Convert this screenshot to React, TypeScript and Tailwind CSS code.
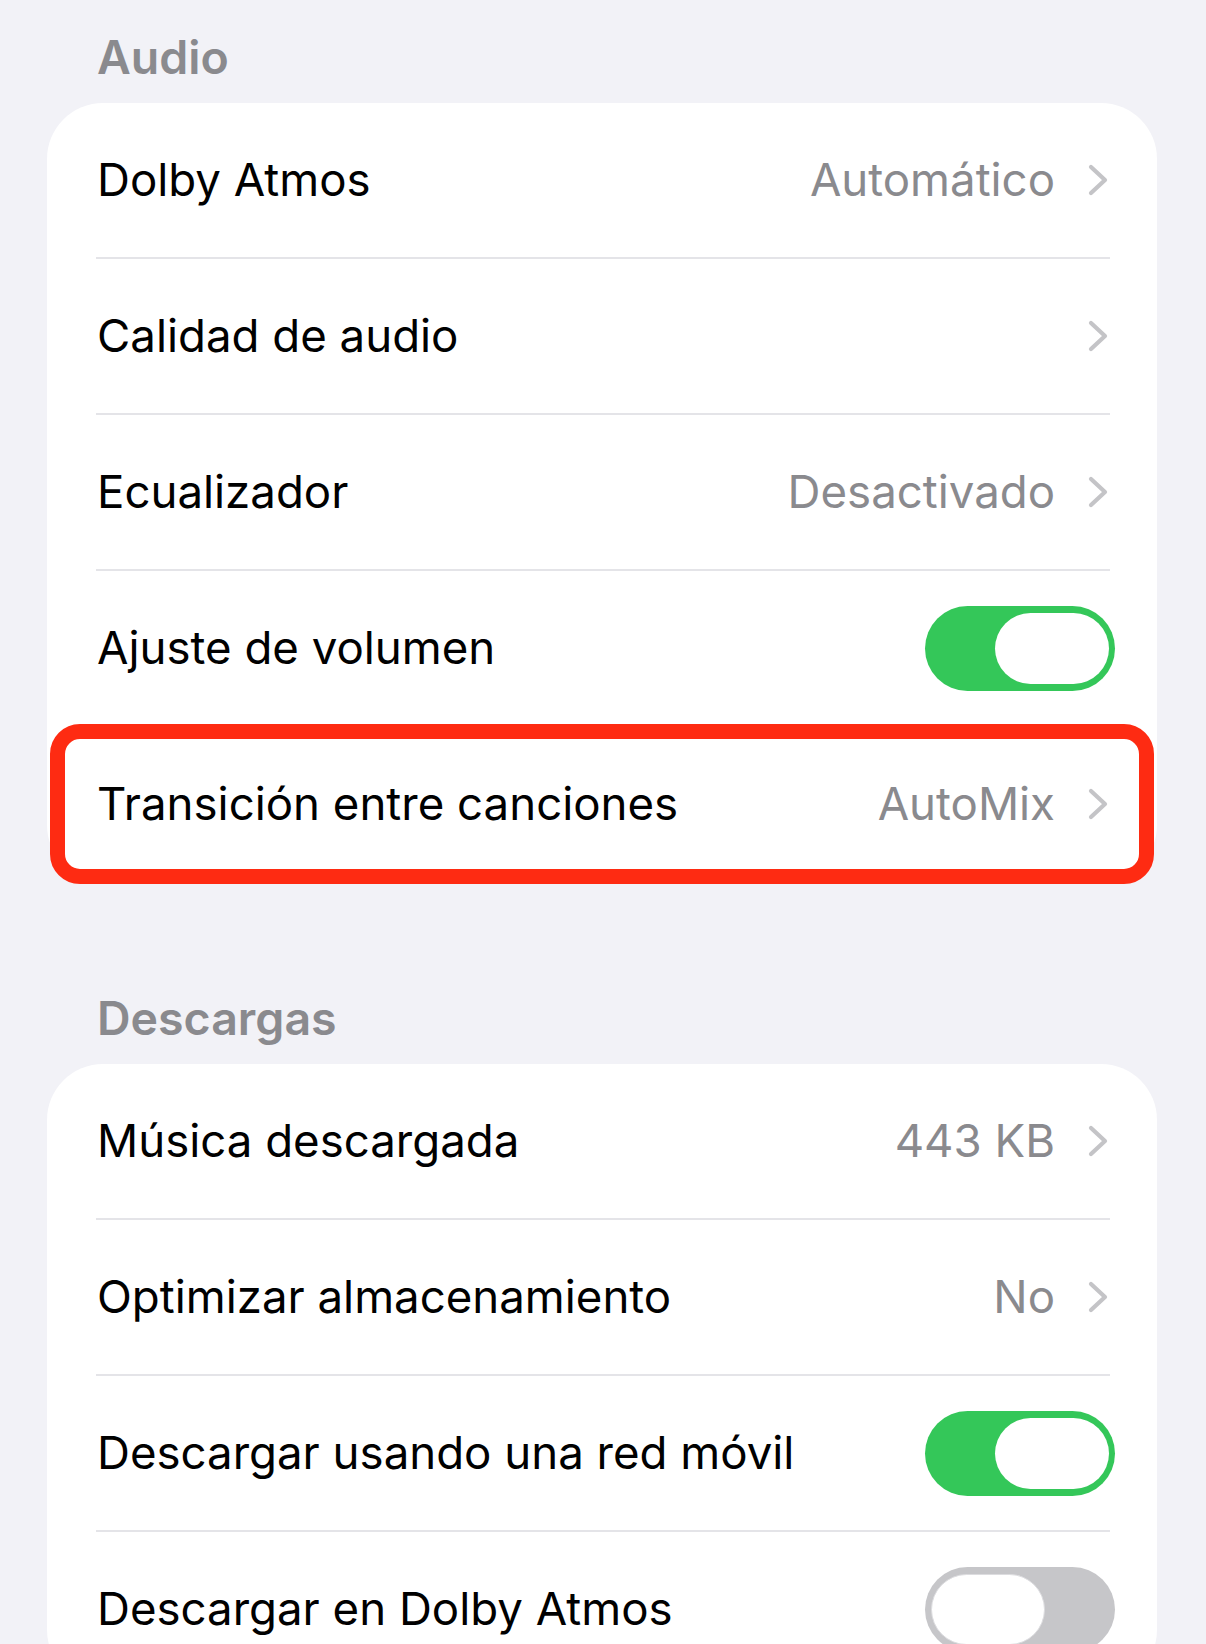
import type { ReactNode } from "react";

type Row = {
  label: string;
  value?: string;
  chevron?: boolean;
  toggle?: boolean;
  highlight?: boolean;
};

const AUDIO_ROWS: Row[] = [
  { label: "Dolby Atmos", value: "Automático", chevron: true },
  { label: "Calidad de audio", chevron: true },
  { label: "Ecualizador", value: "Desactivado", chevron: true },
  { label: "Ajuste de volumen", toggle: true },
  { label: "Transición entre canciones", value: "AutoMix", chevron: true, highlight: true },
];

const DOWNLOAD_ROWS: Row[] = [
  { label: "Música descargada", value: "443 KB", chevron: true },
  { label: "Optimizar almacenamiento", value: "No", chevron: true },
  { label: "Descargar usando una red móvil", toggle: true },
  { label: "Descargar en Dolby Atmos", toggle: false },
];

const FONT = "font-['Inter','Noto_Sans',sans-serif]";

export default function App() {
  return (
    <div className={`relative h-[1644px] w-[1206px] overflow-hidden bg-[#f2f2f7] ${FONT}`}>
      <SectionHeader title="Audio" className="pt-[29px]" />
      <Group rows={AUDIO_ROWS} />
      <SectionHeader title="Descargas" className="pt-[109px]" />
      <Group rows={DOWNLOAD_ROWS} />
    </div>
  );
}

function SectionHeader({ title, className }: { title: string; className?: string }) {
  return (
    <div className={className}>
      <h2 className="mb-[18px] pl-[97px] text-[46.5px] leading-[56px] font-semibold text-[#8a8a8e]">{title}</h2>
    </div>
  );
}

function Group({ rows }: { rows: Row[] }) {
  return (
    <section className="ml-[47px] mr-[49px] rounded-[56px] bg-white">
      {rows.map((row, index) => (
        <div key={row.label}>
          {index > 0 && <div className="ml-[49px] mr-[47px] h-[2px] bg-[#e4e4e8]" />}
          <SettingRow row={row} />
        </div>
      ))}
    </section>
  );
}

function SettingRow({ row }: { row: Row }) {
  let trailing: ReactNode = null;
  if (row.toggle !== undefined) {
    trailing = <Toggle on={row.toggle} />;
  } else if (row.chevron) {
    trailing = (
      <div className="flex items-center gap-[33px] pr-[49px]">
        {row.value && <span className="text-[45.6px] text-[#8a8a8e]">{row.value}</span>}
        <Chevron />
      </div>
    );
  }

  return (
    <div className="relative flex h-[154px] items-center justify-between pl-[50px]">
      <span className="text-[45.6px] text-black">{row.label}</span>
      {trailing}
      {row.highlight && (
        <div className="pointer-events-none absolute -top-[3px] left-[3px] right-[3px] -bottom-[3px] rounded-[30px] border-[15px] border-[#fe2b12]" />
      )}
    </div>
  );
}

function Toggle({ on }: { on: boolean }) {
  return (
    <div className="mr-[42px] flex h-[85px] w-[190px] items-center rounded-full p-[7px] px-[6px] bg-[#c6c6c9] data-[on=true]:bg-[#34c759]" data-on={on}>
      <div
        className={
          on
            ? "ml-auto h-[71px] w-[114px] rounded-full bg-white"
            : "h-[71px] w-[114px] rounded-full border border-[#dcdcdf] bg-white"
        }
      />
    </div>
  );
}

function Chevron() {
  return (
    <svg width="20" height="32" viewBox="0 0 20 32" fill="none">
      <polyline points="3,3 17,16 3,29" stroke="#c4c4c7" strokeWidth="4.2" strokeLinecap="round" strokeLinejoin="round" />
    </svg>
  );
}
